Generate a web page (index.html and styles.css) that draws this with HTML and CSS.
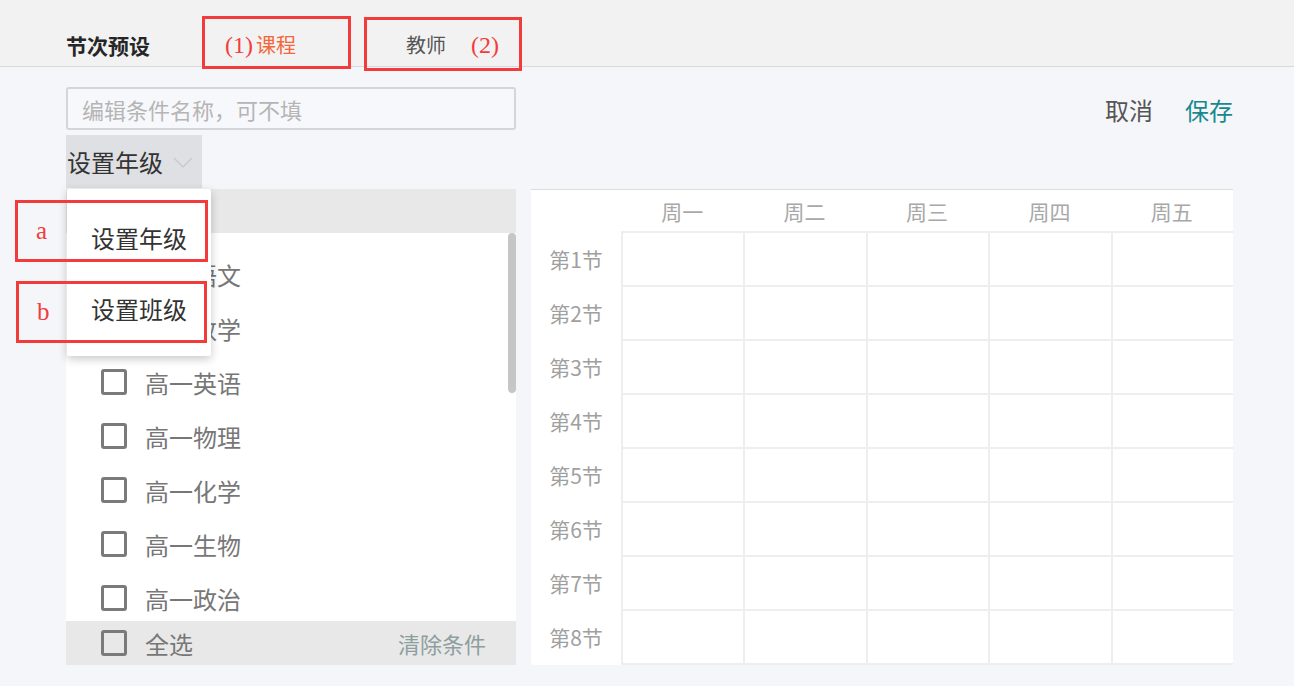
FILE: index.html
```html
<!DOCTYPE html>
<html lang="zh-CN">
<head>
<meta charset="utf-8">
<title>节次预设</title>
<link rel="stylesheet" href="styles.css">
</head>
<body>
<div class="page">
  <header class="topbar">
    <div class="title">节次预设</div>
    <div class="tab tab-course"><span class="mark">(1)</span><span class="tab-active">课程</span></div>
    <div class="tab tab-teacher"><span class="tab-text">教师</span><span class="mark mark-2">(2)</span></div>
  </header>

  <main class="content">
    <div class="toolbar">
      <input class="name-input" type="text" placeholder="编辑条件名称，可不填">
      <div class="actions">
        <span class="cancel">取消</span>
        <span class="save">保存</span>
      </div>
    </div>

    <div class="filter-row">
      <div class="select">
        <span>设置年级</span>
        <svg class="chevron" width="20" height="11" viewBox="0 0 20 11"><polyline points="1,1 10,10 19,1" fill="none" stroke="#c9c9cc" stroke-width="1.4"/></svg>
      </div>
    </div>

    <div class="panels">
      <section class="left-panel">
        <div class="panel-head"></div>
        <ul class="course-list">
          <li class="course"><span class="box"></span><span>高一语文</span></li>
          <li class="course"><span class="box"></span><span>高一数学</span></li>
          <li class="course"><span class="box"></span><span>高一英语</span></li>
          <li class="course"><span class="box"></span><span>高一物理</span></li>
          <li class="course"><span class="box"></span><span>高一化学</span></li>
          <li class="course"><span class="box"></span><span>高一生物</span></li>
          <li class="course"><span class="box"></span><span>高一政治</span></li>
        </ul>
        <div class="panel-foot">
          <span class="box"></span><span class="all">全选</span>
          <span class="clear">清除条件</span>
        </div>
        <div class="scroll-thumb"></div>
        <div class="menu">
          <div class="menu-item">设置年级</div>
          <div class="menu-item">设置班级</div>
        </div>
      </section>

      <section class="right-panel">
        <div class="grid">
          <div class="corner"></div>
          <div class="day">周一</div>
          <div class="day">周二</div>
          <div class="day">周三</div>
          <div class="day">周四</div>
          <div class="day">周五</div>

          <div class="lesson">第1节</div><div class="cell"></div><div class="cell"></div><div class="cell"></div><div class="cell"></div><div class="cell"></div>
          <div class="lesson">第2节</div><div class="cell"></div><div class="cell"></div><div class="cell"></div><div class="cell"></div><div class="cell"></div>
          <div class="lesson">第3节</div><div class="cell"></div><div class="cell"></div><div class="cell"></div><div class="cell"></div><div class="cell"></div>
          <div class="lesson">第4节</div><div class="cell"></div><div class="cell"></div><div class="cell"></div><div class="cell"></div><div class="cell"></div>
          <div class="lesson">第5节</div><div class="cell"></div><div class="cell"></div><div class="cell"></div><div class="cell"></div><div class="cell"></div>
          <div class="lesson">第6节</div><div class="cell"></div><div class="cell"></div><div class="cell"></div><div class="cell"></div><div class="cell"></div>
          <div class="lesson">第7节</div><div class="cell"></div><div class="cell"></div><div class="cell"></div><div class="cell"></div><div class="cell"></div>
          <div class="lesson">第8节</div><div class="cell last"></div><div class="cell last"></div><div class="cell last"></div><div class="cell last"></div><div class="cell last"></div>
        </div>
      </section>
    </div>
  </main>

  <div class="note note-1"></div>
  <div class="note note-2"></div>
  <div class="note note-a"><span class="note-label">a</span></div>
  <div class="note note-b"><span class="note-label">b</span></div>
</div>
</body>
</html>
```

FILE: styles.css
```css
* { box-sizing: border-box; }

html, body {
  margin: 0;
  padding: 0;
}

body {
  background: #f5f6fa;
  font-family: "Noto Sans CJK SC", "Noto Sans", sans-serif;
  color: #333;
  width: 1294px;
  height: 686px;
  overflow: hidden;
}

.page {
  position: relative;
  width: 1294px;
  height: 686px;
}

/* ---------- top bar ---------- */
.topbar {
  height: 67px;
  background: #f2f2f2;
  border-bottom: 1px solid #d9d9d9;
  display: flex;
  align-items: center;
  padding: 24px 0 0 66px;
}

.title {
  font-size: 21px;
  font-weight: bold;
  color: #262626;
  line-height: 28px;
  width: 86px;
}

.tab {
  display: flex;
  align-items: center;
  font-size: 20px;
  line-height: 28px;
}

.tab-course { margin-left: 73px; }
.tab-teacher { margin-left: 110px; }

.tab-active { color: #f2683a; }
.tab-text { color: #555; }

.mark {
  font-family: "Liberation Serif", "DejaVu Serif", serif;
  font-size: 24px;
  color: #f23c3c;
  margin-right: 3px;
}

.mark-2 { margin-left: 25px; margin-right: 0; }

/* ---------- content ---------- */
.content {
  padding: 20px 61px 0 66px;
}

.toolbar {
  display: flex;
  align-items: center;
  justify-content: space-between;
}

.name-input {
  width: 450px;
  height: 43px;
  border: 2px solid #d4d5d8;
  border-radius: 3px;
  background: #f7f8fb;
  padding: 0 0 0 14px;
  font-family: "Noto Sans CJK SC", "Noto Sans", sans-serif;
  font-size: 22px;
  color: #333;
  outline: none;
}

.name-input::placeholder { color: #b5b5b5; }

.actions {
  display: flex;
  gap: 32px;
  font-size: 24px;
  line-height: 32px;
  margin-top: 3px;
}

.cancel { color: #555; }
.save { color: #17898d; }

.filter-row {
  margin-top: 5px;
  display: flex;
}

.select {
  height: 53px;
  width: 136px;
  background: #dfe0e4;
  display: flex;
  align-items: center;
  padding-left: 1px;
  font-size: 24px;
  color: #333;
}

.chevron {
  margin-left: 10px;
  margin-top: 2px;
}

/* ---------- panels ---------- */
.panels {
  margin-top: 1px;
  display: flex;
  gap: 15px;
  align-items: flex-start;
}

.left-panel {
  position: relative;
  width: 450px;
  height: 476px;
  background: #fff;
  display: flex;
  flex-direction: column;
}

.panel-head {
  height: 44px;
  background: #e8e8e8;
}

.course-list {
  list-style: none;
  margin: 0;
  padding: 14px 0 0 35px;
  height: 388px;
  overflow: hidden;
}

.course {
  height: 54px;
  display: flex;
  align-items: center;
  gap: 18px;
  font-size: 24px;
  color: #777;
}

.box {
  width: 26px;
  height: 26px;
  border: 3px solid #7a7a7a;
  border-radius: 3px;
  flex: none;
}

.panel-foot {
  height: 44px;
  background: #e8e8e8;
  display: flex;
  align-items: center;
  padding: 0 30px 0 35px;
  font-size: 24px;
  color: #777;
}

.panel-foot .all { margin-left: 18px; }

.panel-foot .clear {
  margin-left: auto;
  font-size: 22px;
  color: #8e9e9e;
}

.scroll-thumb {
  position: absolute;
  right: 0;
  top: 44px;
  width: 8px;
  height: 160px;
  border-radius: 4px;
  background: #c6c6c6;
}

.menu {
  position: absolute;
  left: 1px;
  top: 0;
  width: 144px;
  height: 167px;
  background: #fff;
  border-radius: 2px;
  box-shadow: 0 3px 10px rgba(0, 0, 0, 0.22);
  padding-top: 13px;
}

.menu-item {
  height: 71px;
  line-height: 71px;
  padding-left: 24px;
  font-size: 24px;
  color: #333;
}

/* ---------- timetable ---------- */
.right-panel {
  width: 702px;
  height: 476px;
  background: #fff;
  border-top: 1px solid #dcdcdf;
}

.grid {
  display: grid;
  grid-template-columns: 90px repeat(5, 1fr);
  grid-template-rows: 41px repeat(8, 54px);
}

.day {
  display: flex;
  align-items: center;
  justify-content: center;
  font-size: 21px;
  color: #a8a8a8;
}

.lesson {
  display: flex;
  align-items: center;
  justify-content: center;
  font-size: 21px;
  color: #a0a0a0;
  padding-top: 2px;
}

.cell {
  border-top: 2px solid #eeeeee;
  border-left: 2px solid #eeeeee;
}

.cell.last {
  height: 56px;
  border-bottom: 2px solid #eeeeee;
}

/* ---------- red annotations ---------- */
.note {
  position: absolute;
  border: 3px solid #f23c3c;
  display: flex;
  align-items: center;
}

.note-1 { left: 202px; top: 16px; width: 149px; height: 53px; }
.note-2 { left: 364px; top: 17px; width: 158px; height: 54px; }
.note-a { left: 15px; top: 200px; width: 193px; height: 62px; }
.note-b { left: 16px; top: 281px; width: 191px; height: 62px; }

.note-label {
  font-family: "Liberation Serif", "DejaVu Serif", serif;
  font-size: 25px;
  color: #f23c3c;
  margin-left: 18px;
  line-height: 30px;
}
```
